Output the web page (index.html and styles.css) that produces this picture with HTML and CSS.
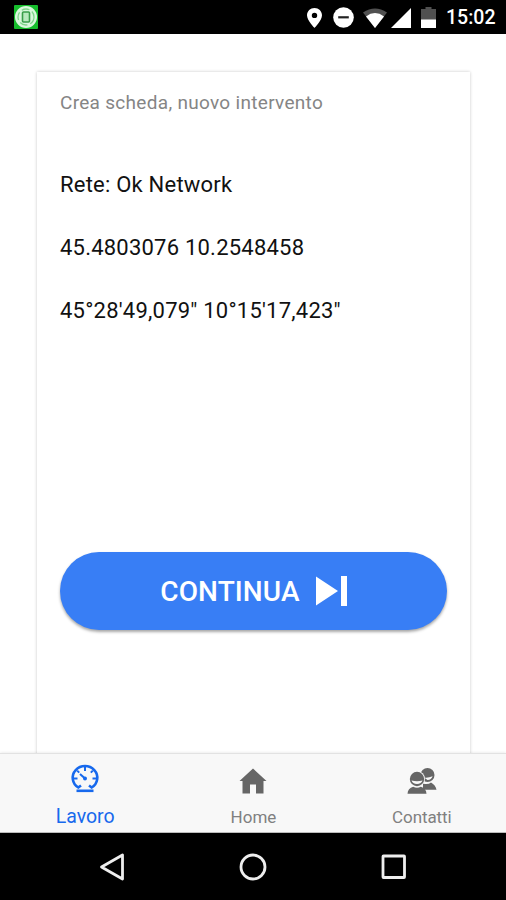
FILE: index.html
```html
<!DOCTYPE html>
<html lang="it">
<head>
<meta charset="utf-8">
<title>Crea scheda</title>
<link rel="stylesheet" href="styles.css">
</head>
<body>
<header class="status">
  <svg class="app-icon" width="24" height="24" viewBox="0 0 24 24"><rect width="24" height="24" rx="1" fill="#16bd2c"/><circle cx="12" cy="12" r="11" fill="#d9f7dc"/><circle cx="12" cy="12" r="8" fill="none" stroke="#7fd48a" stroke-width="1.3" stroke-dasharray="8 3"/><rect x="8.5" y="7" width="7" height="10" rx="1" fill="#b8e9bd" stroke="#399d49" stroke-width="1.6"/></svg>
  <div class="indicators">
    <svg class="pin" width="15" height="20" viewBox="0 0 15 20"><path fill="#fff" fill-rule="evenodd" d="M7.5 0C3.3 0 0 3.2 0 7.3C0 12.5 7.5 20 7.5 20S15 12.5 15 7.3C15 3.2 11.7 0 7.5 0ZM7.5 4.7a2.7 2.7 0 1 1 0 5.4a2.7 2.7 0 1 1 0-5.4Z"/></svg>
    <svg class="dnd" width="21" height="21" viewBox="0 0 21 21"><circle cx="10.5" cy="10.5" r="10.3" fill="#fff"/><path d="M5.2 10.3h10.6" stroke="#222" stroke-width="2.2"/></svg>
    <svg class="wifi" width="24" height="20" viewBox="0 0 24 20"><path fill="#505050" d="M0 4.5Q12-3.5 24 4.5L12 20Z"/><path fill="#fff" d="M3 8.400Q12 1.800 21 8.400L12 20Z"/></svg>
    <svg class="signal" width="20" height="20" viewBox="0 0 20 20"><path fill="#fff" d="M20 0V20H0Z"/></svg>
    <svg class="battery" width="15" height="21" viewBox="0 0 15 21"><path fill="#505050" d="M4.500 0h6v2H15v11H0V2h4.500Z"/><path fill="#fff" d="M0 12.500h15V21H0Z"/></svg>
    <span class="clock">15:02</span>
  </div>
</header>
<main class="content">
  <section class="card">
    <p class="heading">Crea scheda, nuovo intervento</p>
    <p class="info network">Rete: Ok Network</p>
    <p class="info decimal">45.4803076 10.2548458</p>
    <p class="info degrees">45°28'49,079" 10°15'17,423"</p>
    <button class="continue"><span class="caption">CONTINUA</span><svg width="31" height="31" viewBox="0 0 31 31"><path fill="#fff" d="M0 .500L22 15L0 29.500ZM25 0h6v30h-6Z"/></svg></button>
  </section>
</main>
<nav class="tabs">
  <a class="tab active">
    <svg width="30" height="32" viewBox="0 0 30 32"><g fill="none" stroke="#1769ed"><path stroke-width="2.600" d="M11 22.500L8.300 24.500A12.300 11.700 0 1 1 21.700 24.500L19 22.500"/><path stroke-width="2" d="M15 4v4M3.500 15.500h4M22.500 15.500h4M7.200 7.600l2 2M22.800 7.600l-2 2"/><path stroke-width="2" d="M10 11l5 4.500"/><path stroke-width="2.600" d="M6.500 27.800h17"/></g><circle cx="15" cy="15.500" r="2" fill="#1769ed"/></svg>
    <span class="label">Lavoro</span>
  </a>
  <a class="tab">
    <svg width="28" height="32" viewBox="1 0 28 32"><path fill="#666" d="M15 5.500L28.500 18H25.500V30.500H18V21.500H12V30.500H4.500V18H1.500Z"/></svg>
    <span class="label home">Home</span>
  </a>
  <a class="tab">
    <svg width="30" height="32" viewBox="0 0 30 32"><g fill="#666"><circle cx="20.500" cy="12" r="7"/><path d="M16 20.500Q21 22 24 19.500Q28.500 22 29.500 26.800H16Z"/></g><path fill="#f8f8f8" d="M17 14.500Q21 15.200 25.600 13.200Q24.500 16.800 20.500 17Z"/><circle cx="10" cy="16" r="8" fill="#f8f8f8"/><circle cx="10" cy="16" r="7.200" fill="#666"/><path fill="#f8f8f8" d="M4.500 17.500Q10 19 15.500 17.500Q14.300 20.900 10 21Q5.700 20.900 4.500 17.500Z"/><path fill="#666" d="M.5 30.700Q.8 25.500 6.200 23.800Q10 25.800 13.800 23.800Q19.200 25.500 19.500 30.700Z"/></svg>
    <span class="label contacts">Contatti</span>
  </a>
</nav>
<footer class="android-nav">
  <svg width="28" height="28" viewBox="0 0 28 28"><path d="M24.500 2V26L3.500 14Z"/></svg>
  <svg width="28" height="28" viewBox="0 0 28 28"><circle cx="14" cy="14" r="12"/></svg>
  <svg width="28" height="28" viewBox="0 0 28 28"><rect x="3" y="3" width="21.500" height="21.500" rx=".5"/></svg>
</footer>
</body>
</html>
```
FILE: styles.css
```css
* { box-sizing: border-box; }
body { margin: 0; width: 506px; height: 900px; display: flex; flex-direction: column; overflow: hidden; background: #fff; font-family: Roboto, "Liberation Sans", sans-serif; }
svg { display: block; flex: none; }
p { margin: 0; white-space: nowrap; }
.status { height: 34px; flex: none; background: #000; display: flex; justify-content: space-between; align-items: center; padding: 0 10px 0 14px; }
.indicators { display: flex; align-items: center; height: 34px; padding-top: 1px; }
.dnd { margin-left: 11px; }
.wifi { margin-left: 9px; }
.signal { margin-left: 4px; }
.battery { margin-left: 10px; }
.clock { width: 50px; margin-left: 10px; color: #fff; font-size: 19.5px; font-weight: 500; line-height: 34px; white-space: nowrap; }
.content { flex: 1; min-height: 0; padding: 38px 36px 0 37px; overflow: hidden; }
.card { height: 720px; padding: 19px 23px; background: #fff; box-shadow: 0 0 3px rgba(0,0,0,.22); }
.heading { height: 24px; line-height: 24px; font-size: 19px; color: #858585; letter-spacing: .3px; }
.info { height: 28px; line-height: 28px; font-size: 22px; color: #111; letter-spacing: .22px; }
.network { margin-top: 56px; }
.decimal { margin-top: 35px; }
.degrees { margin-top: 35px; }
.continue { width: 387px; height: 78px; margin: 227px 0 0; padding: 0; border: 0; border-radius: 39px; background: #387ef5; color: #fff; box-shadow: 0 2px 3px rgba(0,0,0,.35); font: 500 28px/78px Roboto, "Liberation Sans", sans-serif; display: flex; align-items: center; justify-content: center; gap: 16px; }
.caption { letter-spacing: .1px; padding-top: 2px; }
.tabs { height: 80px; flex: none; display: grid; grid-template-columns: repeat(3, 1fr); background: #f8f8f8; border-top: 1px solid #e2e2e2; border-bottom: 1px solid #bbb; box-shadow: 0 0 3px rgba(0,0,0,.12); z-index: 1; padding-left: 1px; }
.tab { display: flex; flex-direction: column; align-items: center; padding-top: 9px; color: #808080; }
.label { margin-top: 10px; font-size: 17px; line-height: 24px; }
.contacts { letter-spacing: -.08px; }
.active { color: #1769ed; }
.active .label { font-size: 19.5px; }
.android-nav { height: 67px; flex: none; background: #000; display: flex; align-items: center; justify-content: center; gap: 113px; }
.android-nav svg { fill: none; stroke: #eee; stroke-width: 2.8; stroke-linejoin: round; }
```
